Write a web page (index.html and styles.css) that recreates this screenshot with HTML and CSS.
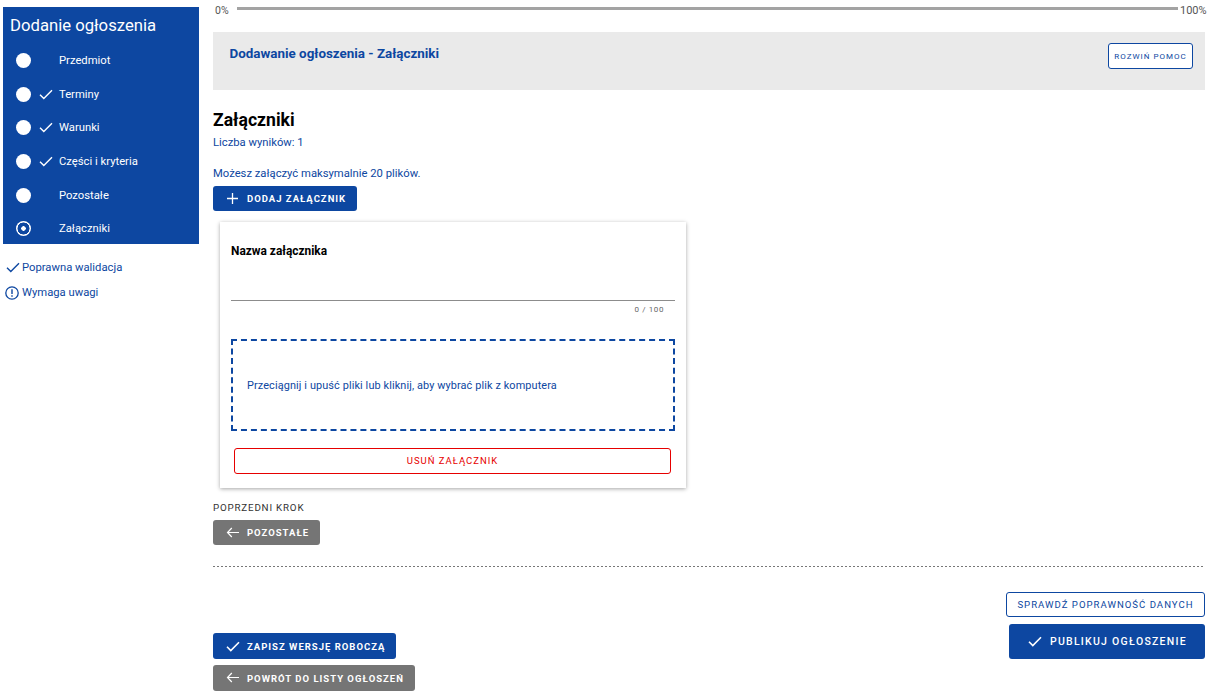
FILE: index.html
```html
<!DOCTYPE html>
<html lang="pl">
<head>
<meta charset="utf-8">
<title>Dodanie ogłoszenia</title>
<link rel="stylesheet" href="styles.css">
</head>
<body>
<div class="page">
  <aside class="side">
    <nav class="steps">
      <h2 class="steps-title">Dodanie ogłoszenia</h2>
      <ul class="step-list">
        <li class="step"><span class="dot"></span><span class="tick"></span><span>Przedmiot</span></li>
        <li class="step"><span class="dot"></span><span class="tick"><svg viewBox="0 0 14 11" width="14" height="11"><path d="M1 5.8 4.8 9.6 13 1.3" fill="none" stroke="#fff" stroke-width="1.4"/></svg></span><span>Terminy</span></li>
        <li class="step"><span class="dot"></span><span class="tick"><svg viewBox="0 0 14 11" width="14" height="11"><path d="M1 5.8 4.8 9.6 13 1.3" fill="none" stroke="#fff" stroke-width="1.4"/></svg></span><span>Warunki</span></li>
        <li class="step"><span class="dot"></span><span class="tick"><svg viewBox="0 0 14 11" width="14" height="11"><path d="M1 5.8 4.8 9.6 13 1.3" fill="none" stroke="#fff" stroke-width="1.4"/></svg></span><span>Części i kryteria</span></li>
        <li class="step"><span class="dot"></span><span class="tick"></span><span>Pozostałe</span></li>
        <li class="step"><span class="dot dot-current"></span><span class="tick"></span><span>Załączniki</span></li>
      </ul>
    </nav>
    <ul class="legend">
      <li class="legend-item"><svg viewBox="0 0 14 11" width="14" height="11"><path d="M1 5.8 4.8 9.6 13 1.3" fill="none" stroke="#0d47a1" stroke-width="1.4"/></svg><span>Poprawna walidacja</span></li>
      <li class="legend-item legend-warn"><svg viewBox="0 0 14 14" width="14" height="14"><circle cx="7" cy="7" r="6.2" fill="none" stroke="#0d47a1" stroke-width="1.3"/><path d="M7 3.2V8M7 9.3v1.5" fill="none" stroke="#0d47a1" stroke-width="1.4"/></svg><span>Wymaga uwagi</span></li>
    </ul>
  </aside>
  <main class="main">
    <div class="progress">
      <span class="pct">0%</span>
      <span class="bar"></span>
      <span class="pct pct-end">100%</span>
    </div>
    <section class="help">
      <h1 class="help-title">Dodawanie ogłoszenia - Załączniki</h1>
      <button class="btn-help">ROZWIŃ POMOC</button>
    </section>
    <h2 class="heading">Załączniki</h2>
    <p class="info">Liczba wyników: 1</p>
    <p class="info info-limit">Możesz załączyć maksymalnie 20 plików.</p>
    <button class="btn btn-blue btn-add"><svg viewBox="0 0 11 11" width="11" height="11"><path d="M5.5 0v11M0 5.5h11" stroke="#fff" stroke-width="1.3"/></svg><span>DODAJ ZAŁĄCZNIK</span></button>
    <section class="card">
      <label class="field-label">Nazwa załącznika</label>
      <div class="field-line"></div>
      <div class="counter">0 / 100</div>
      <div class="drop">Przeciągnij i upuść pliki lub kliknij, aby wybrać plik z komputera</div>
      <button class="btn-remove">USUŃ ZAŁĄCZNIK</button>
    </section>
    <div class="prev-label">POPRZEDNI KROK</div>
    <button class="btn btn-grey btn-prev"><svg viewBox="0 0 14 11" width="14" height="11"><path d="M13 5.5H1.5M5.8 1 1.5 5.5 5.8 10" fill="none" stroke="#fff" stroke-width="1.2"/></svg><span>POZOSTAŁE</span></button>
    <div class="divider"></div>
    <div class="actions">
      <div class="actions-left">
        <button class="btn btn-blue btn-save"><svg viewBox="0 0 14 11" width="14" height="11"><path d="M1 5.8 4.8 9.6 13 1.3" fill="none" stroke="#fff" stroke-width="1.6"/></svg><span>ZAPISZ WERSJĘ ROBOCZĄ</span></button>
        <button class="btn btn-grey btn-back"><svg class="arrow-up" viewBox="0 0 14 11" width="14" height="11"><path d="M13 5.5H1.5M5.8 1 1.5 5.5 5.8 10" fill="none" stroke="#fff" stroke-width="1.2"/></svg><span>POWRÓT DO LISTY OGŁOSZEŃ</span></button>
      </div>
      <div class="actions-right">
        <button class="btn-check">SPRAWDŹ POPRAWNOŚĆ DANYCH</button>
        <button class="btn-publish"><svg viewBox="0 0 14 11" width="14" height="11"><path d="M1 5.8 4.8 9.6 13 1.3" fill="none" stroke="#fff" stroke-width="1.6"/></svg><span>PUBLIKUJ OGŁOSZENIE</span></button>
      </div>
    </div>
  </main>
</div>
</body>
</html>
```
FILE: styles.css
```css
* { box-sizing: border-box; }
html, body { margin: 0; padding: 0; background: #fff; }
body { font-family: Roboto, "Liberation Sans", sans-serif; color: #0d47a1; overflow: hidden; height: 696px; }
ul { list-style: none; margin: 0; padding: 0; }
h1, h2, p { margin: 0; }
button { font-family: inherit; cursor: pointer; white-space: nowrap; }
svg { flex: none; }
.page { display: flex; width: 1210px; height: 696px; }
.side { width: 213px; flex: none; padding: 7px 14px 0 3px; }
.steps { background: #0d47a1; height: 237px; color: #fff; }
.steps-title { font-size: 16.7px; font-weight: 400; line-height: 20px; padding: 9px 0 0 7px; height: 37px; }
.step-list { display: flex; flex-direction: column; }
.step { display: flex; align-items: center; height: 33.6px; font-size: 11.25px; padding-left: 12.7px; }
.dot { width: 15px; height: 15px; border-radius: 50%; background: #fff; flex: none; margin-right: 7.3px; }
.dot-current { background: radial-gradient(circle, #fff 0 2px, #0d47a1 2.5px 5.8px, #fff 6.2px); }
.tick { width: 21px; flex: none; display: flex; align-items: center; height: 11px; padding-left: 1px; }
.legend { padding: 11px 0 0 3px; }
.legend-item { display: flex; align-items: center; gap: 2px; height: 25px; font-size: 11.25px; }
.legend-warn { margin-left: -1px; gap: 3px; }
.main { width: 992px; flex: none; display: flex; flex-direction: column; align-items: flex-start; }
.progress { width: 100%; height: 32px; display: flex; align-items: flex-start; }
.pct { font-size: 10.5px; color: #555; line-height: 12px; padding: 5px 0 0 2px; width: 24px; flex: none; }
.bar { width: 941px; height: 3px; margin-top: 7px; background: #a3a3a3; flex: none; }
.pct-end { font-size: 11px; width: 30px; padding-left: 2px; }
.help { width: 100%; height: 58px; background: #eaeaea; display: flex; justify-content: space-between; align-items: flex-start; padding: 14px 12px 0 16.5px; }
.help-title { font-size: 13.4px; font-weight: 700; line-height: 16px; }
.btn-help { width: 85px; height: 26px; margin-top: -3px; background: #fff; border: 1px solid #0d47a1; border-radius: 3px; color: #0d47a1; font-size: 8px; font-weight: 400; letter-spacing: 1px; padding: 0; }
.heading { font-size: 17.6px; font-weight: 700; color: #000; line-height: 22px; margin-top: 19px; }
.info { font-size: 11.25px; line-height: 14px; margin-top: 5px; }
.info-limit { margin-top: 17px; }
.btn { display: inline-flex; align-items: center; border: 0; border-radius: 3px; color: #fff; font-size: 9.5px; font-weight: 700; letter-spacing: 1px; padding: 0 0 0 13px; gap: 7px; height: 25px; }
.btn-blue { background: #0d47a1; }
.btn-grey { background: #757575; }
.btn-add { width: 144px; margin-top: 5px; gap: 9px; padding-left: 14px; }
.card { width: 466px; height: 266px; margin: 11px 0 0 7px; background: #fff; box-shadow: 0 1px 4px rgba(0,0,0,.35); padding: 22px 11px 0; display: flex; flex-direction: column; }
.field-label { font-size: 11.9px; font-weight: 700; color: #000; line-height: 14px; }
.field-line { height: 1px; background: #8c8c8c; margin-top: 42px; }
.counter { font-size: 8px; letter-spacing: .6px; color: #666; text-align: right; padding-right: 11px; line-height: 10px; margin-top: 4px; }
.drop { height: 92px; margin-top: 24px; border: 2px dashed #0d47a1; display: flex; align-items: center; padding: 0 0 0 14px; font-size: 10.9px; letter-spacing: .01em; }
.btn-remove { width: 437px; height: 26px; margin: 17px 0 0 3px; background: #fff; border: 1px solid #e60000; border-radius: 3px; color: #e60000; font-size: 9.5px; font-weight: 400; letter-spacing: 1px; padding: 0 0 2px; }
.prev-label { font-size: 9.8px; font-weight: 400; letter-spacing: .8px; color: #333; line-height: 12px; margin-top: 14px; }
.btn-prev { width: 107px; margin-top: 6px; }
.divider { width: 100%; height: 1px; background: repeating-linear-gradient(90deg, #777 0 2px, transparent 2px 4px); margin-top: 21px; }
.actions { width: 100%; display: flex; justify-content: space-between; align-items: flex-start; }
.actions-left { display: flex; flex-direction: column; align-items: flex-start; gap: 6px; padding-top: 66px; }
.btn-save { width: 183px; height: 26px; }
.btn-back { width: 202px; height: 26px; }
.arrow-up { margin-top: -2px; }
.actions-right { display: flex; flex-direction: column; align-items: flex-end; gap: 7px; padding-top: 25px; }
.btn-check { width: 199px; height: 25px; background: #fff; border: 1px solid #0d47a1; border-radius: 3px; color: #0d47a1; font-size: 9.6px; font-weight: 400; letter-spacing: 1px; padding: 0; }
.btn-publish { width: 196px; height: 35px; display: flex; align-items: center; gap: 8px; background: #0d47a1; border: 0; border-radius: 3px; color: #fff; font-size: 10.5px; font-weight: 500; letter-spacing: 1.25px; padding: 0 0 0 19px; }
```
